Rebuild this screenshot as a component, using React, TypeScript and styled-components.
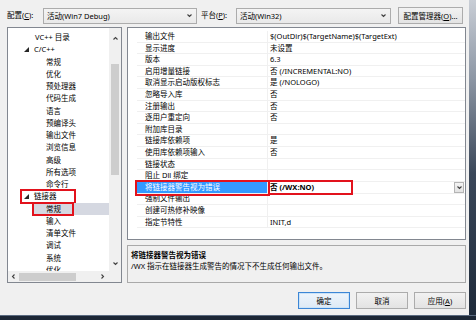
import React from "react";
import styled, { createGlobalStyle, css } from "styled-components";

const GlobalStyle = createGlobalStyle`
  html, body { margin: 0; padding: 0; background: #f0f0f0; }
  body {
    font-family: "Noto Sans", "Noto Sans CJK SC", sans-serif;
    font-size: 7.5px;
    color: #000;
  }
  * { box-sizing: border-box; }
`;

const RED = "#e2121c";

const Screen = styled.div`
  width: 476px;
  height: 320px;
  display: flex;
  flex-direction: column;
  overflow: hidden;
`;

const Main = styled.div`
  display: flex;
  height: 315px;
`;

const Dialog = styled.div`
  width: 469px;
  background: #f0f0f0;
  padding: 7px 0 0 7px;
  display: flex;
  flex-direction: column;
`;

const RightEdge = styled.div`
  width: 7px;
  background: linear-gradient(to bottom, #c9ced6 0%, #8c96a4 25%, #3a4759 55%, #1e2a3a 100%);
`;

const BottomEdge = styled.div`
  height: 5px;
  background: #1c2736;
  border-top: 1px solid #5a6a80;
`;

/* ---------- top bar ---------- */
const TopBar = styled.div`
  display: flex;
  align-items: center;
  height: 17px;
`;

const FieldLabel = styled.span<{ $w: number; $ml?: number }>`
  width: ${(p) => p.$w}px;
  margin-left: ${(p) => p.$ml ?? 0}px;
  line-height: 17px;
  white-space: nowrap;
`;

const Combo = styled.div<{ $w: number }>`
  width: ${(p) => p.$w}px;
  height: 16px;
  border: 1px solid #acacac;
  background: linear-gradient(#f4f4f4, #e9e9e9);
  display: flex;
  align-items: center;
  justify-content: space-between;
  padding: 0 4px 0 3px;
  white-space: nowrap;
`;

const PushButton = styled.div<{ $w: number; $default?: boolean; $ml?: number }>`
  width: ${(p) => p.$w}px;
  height: 17px;
  margin-left: ${(p) => p.$ml ?? 0}px;
  border: 1px solid #acacac;
  background: linear-gradient(#f2f2f2, #e3e3e3);
  display: flex;
  align-items: center;
  justify-content: center;
  white-space: nowrap;
  ${(p) =>
    p.$default &&
    css`
      border-color: #3c86d6;
      box-shadow: inset 0 0 0 1px #cbe3f8;
      background: linear-gradient(#eef5fc, #dde9f5);
    `}
`;

/* ---------- body ---------- */
const Body = styled.div`
  display: flex;
  gap: 5px;
  margin-top: 3px;
  height: 256px;
`;

const Tree = styled.div`
  width: 115px;
  height: 256px;
  border: 1px solid #828790;
  background: #fff;
  display: grid;
  grid-template-columns: 1fr 12px;
  grid-template-rows: 1fr 11px;
  overflow: hidden;
`;

const TreeList = styled.div`
  padding-top: 3px;
  overflow: hidden;
`;

const TreeRow = styled.div<{ $level: number }>`
  height: 12.25px;
  line-height: 12.25px;
  display: flex;
  padding-left: ${(p) => (p.$level === 1 ? 13 : 25)}px;
  white-space: nowrap;
`;

const TreeCell = styled.div<{ $selected?: boolean }>`
  flex: 1;
  display: flex;
  background: ${(p) => (p.$selected ? "#d5d8e1" : "transparent")};
`;

const TreeLabel = styled.span<{ $level: number; $mark?: number }>`
  display: flex;
  align-items: center;
  gap: 5px;
  padding-left: ${(p) => (p.$level === 1 ? 3 : 13)}px;
  ${(p) =>
    p.$mark &&
    css`
      width: ${p.$mark}px;
      outline: 2px solid ${RED};
      outline-offset: -1px;
    `}
`;

const Twisty = styled.svg`
  width: 5px;
  height: 5px;
  flex: none;
`;

const Spacer = styled.span`
  width: 6px;
  flex: none;
`;

const VScroll = styled.div`
  background: #f0f0f0;
  display: flex;
  flex-direction: column;
  align-items: center;
`;

const ScrollArrow = styled.div<{ $h: number; $w?: number }>`
  height: ${(p) => p.$h}px;
  width: ${(p) => p.$w ?? 12}px;
  display: flex;
  align-items: center;
  justify-content: center;
  flex: none;
`;

const VTrack = styled.div`
  flex: 1;
  width: 100%;
  display: flex;
  flex-direction: column;
  align-items: center;
`;

const VThumb = styled.div`
  margin-top: 16px;
  width: 8px;
  height: 111px;
  background: #cdcdcd;
`;

const HScroll = styled.div`
  background: #f0f0f0;
  display: flex;
  align-items: center;
`;

const HTrack = styled.div`
  flex: 1;
  height: 100%;
  display: flex;
  align-items: center;
`;

const HThumb = styled.div`
  width: 57px;
  height: 8px;
  background: #cdcdcd;
`;

const Corner = styled.div`
  background: #f0f0f0;
`;

/* ---------- property grid ---------- */
const RightCol = styled.div`
  width: 339px;
  display: flex;
  flex-direction: column;
  gap: 5px;
`;

const Grid = styled.div`
  height: 213px;
  border: 1px solid #828790;
  background: #fff;
  padding-top: 3px;
  overflow: hidden;
`;

const GridRow = styled.div`
  height: 11.6px;
  display: grid;
  grid-template-columns: 9px 131px 1fr;
  white-space: nowrap;
`;

const Gutter = styled.div``;

const NameCell = styled.div<{ $selected?: boolean }>`
  line-height: 10.6px;
  padding-left: 8px;
  border-bottom: 1px solid #f0f0f0;
  border-right: 1px solid #f0f0f0;
  ${(p) =>
    p.$selected &&
    css`
      background: #3399ff;
      color: #fff;
      outline: 2px solid ${RED};
      outline-offset: 0px;
      position: relative;
      z-index: 1;
    `}
`;

const ValueCell = styled.div<{ $selected?: boolean }>`
  line-height: 10.6px;
  border-bottom: 1px solid #f0f0f0;
  display: flex;
  align-items: stretch;
  ${(p) =>
    p.$selected &&
    css`
      font-weight: bold;
    `}
`;

const ValueText = styled.span<{ $mark?: number }>`
  padding-left: 2px;
  ${(p) =>
    p.$mark &&
    css`
      width: ${p.$mark}px;
      outline: 2px solid ${RED};
      outline-offset: 0px;
    `}
`;

const DropButton = styled.div`
  margin-left: auto;
  margin-right: 1px;
  width: 10px;
  height: 11px;
  border: 1px solid #b4b4b4;
  background: linear-gradient(#f4f4f4, #e2e2e2);
  display: flex;
  align-items: center;
  justify-content: center;
`;

/* ---------- description ---------- */
const Description = styled.div`
  height: 38px;
  border: 1px solid #a9a9a9;
  background: #f0f0f0;
  padding: 4px 3px;
  line-height: 10.5px;
  white-space: nowrap;
`;

const DescTitle = styled.div`
  font-weight: bold;
`;

const DescText = styled.div``;

/* ---------- footer ---------- */
const Footer = styled.div`
  display: flex;
  justify-content: flex-end;
  gap: 6px;
  margin-top: 9px;
  padding-right: 3px;
`;

/* ---------- icons ---------- */
const Chevron = ({ dir, size = 5 }: { dir: "up" | "down" | "left" | "right"; size?: number }) => {
  const pts: Record<string, string> = {
    down: "0.5,1.5 2.5,3.5 4.5,1.5",
    up: "0.5,3.5 2.5,1.5 4.5,3.5",
    left: "3.5,0.5 1.5,2.5 3.5,4.5",
    right: "1.5,0.5 3.5,2.5 1.5,4.5",
  };
  return (
    <svg width={size} height={size} viewBox="0 0 5 5">
      <polyline points={pts[dir]} fill="none" stroke="#404040" strokeWidth="1.1" />
    </svg>
  );
};

type TItem = { label: string; level: number; expanded?: boolean; selected?: boolean; mark?: number };

const treeItems: TItem[] = [
  { label: "VC++ 目录", level: 1 },
  { label: "C/C++", level: 1, expanded: true },
  { label: "常规", level: 2 },
  { label: "优化", level: 2 },
  { label: "预处理器", level: 2 },
  { label: "代码生成", level: 2 },
  { label: "语言", level: 2 },
  { label: "预编译头", level: 2 },
  { label: "输出文件", level: 2 },
  { label: "浏览信息", level: 2 },
  { label: "高级", level: 2 },
  { label: "所有选项", level: 2 },
  { label: "命令行", level: 2 },
  { label: "链接器", level: 1, expanded: true, mark: 54 },
  { label: "常规", level: 2, selected: true, mark: 40 },
  { label: "输入", level: 2 },
  { label: "清单文件", level: 2 },
  { label: "调试", level: 2 },
  { label: "系统", level: 2 },
  { label: "优化", level: 2 },
];

type GItem = { name: string; value: string; selected?: boolean };

const gridItems: GItem[] = [
  { name: "输出文件", value: "$(OutDir)$(TargetName)$(TargetExt)" },
  { name: "显示进度", value: "未设置" },
  { name: "版本", value: "6.3" },
  { name: "启用增量链接", value: "否 (/INCREMENTAL:NO)" },
  { name: "取消显示启动版权标志", value: "是 (/NOLOGO)" },
  { name: "忽略导入库", value: "否" },
  { name: "注册输出", value: "否" },
  { name: "逐用户重定向", value: "否" },
  { name: "附加库目录", value: "" },
  { name: "链接库依赖项", value: "是" },
  { name: "使用库依赖项输入", value: "否" },
  { name: "链接状态", value: "" },
  { name: "阻止 Dll 绑定", value: "" },
  { name: "将链接器警告视为错误", value: "否 (/WX:NO)", selected: true },
  { name: "强制文件输出", value: "" },
  { name: "创建可热修补映像", value: "" },
  { name: "指定节特性", value: "INIT,d" },
];

export default function App() {
  return (
    <>
      <GlobalStyle />
      <Screen>
        <Main>
          <Dialog>
            <TopBar>
              <FieldLabel $w={36}>
                配置(<u>C</u>):
              </FieldLabel>
              <Combo $w={154}>
                <span>活动(Win7 Debug)</span>
                <Chevron dir="down" />
              </Combo>
              <FieldLabel $w={35} $ml={4}>
                平台(<u>P</u>):
              </FieldLabel>
              <Combo $w={155}>
                <span>活动(Win32)</span>
                <Chevron dir="down" />
              </Combo>
              <PushButton $w={65} $ml={7}>
                配置管理器(<u>O</u>)...
              </PushButton>
            </TopBar>

            <Body>
              <Tree>
                <TreeList>
                  {treeItems.map((t, i) => (
                    <TreeRow key={i} $level={t.level}>
                      <TreeCell $selected={t.selected}>
                        <TreeLabel $level={t.level} $mark={t.mark}>
                          {t.level === 1 &&
                            (t.expanded ? (
                              <Twisty viewBox="0 0 5 5">
                                <polygon points="5,0 5,5 0,5" fill="#262626" />
                              </Twisty>
                            ) : (
                              <Spacer />
                            ))}
                          <span>{t.label}</span>
                        </TreeLabel>
                      </TreeCell>
                    </TreeRow>
                  ))}
                </TreeList>
                <VScroll>
                  <ScrollArrow $h={20}>
                    <Chevron dir="up" />
                  </ScrollArrow>
                  <VTrack>
                    <VThumb />
                  </VTrack>
                  <ScrollArrow $h={15}>
                    <Chevron dir="down" />
                  </ScrollArrow>
                </VScroll>
                <HScroll>
                  <ScrollArrow $h={11} $w={11}>
                    <Chevron dir="left" />
                  </ScrollArrow>
                  <HTrack>
                    <HThumb />
                  </HTrack>
                  <ScrollArrow $h={11} $w={14}>
                    <Chevron dir="right" />
                  </ScrollArrow>
                </HScroll>
                <Corner />
              </Tree>

              <RightCol>
                <Grid>
                  {gridItems.map((g, i) => (
                    <GridRow key={i}>
                      <Gutter />
                      <NameCell $selected={g.selected}>{g.name}</NameCell>
                      <ValueCell $selected={g.selected}>
                        <ValueText $mark={g.selected ? 83 : undefined}>{g.value}</ValueText>
                        {g.selected && (
                          <DropButton>
                            <Chevron dir="down" size={5} />
                          </DropButton>
                        )}
                      </ValueCell>
                    </GridRow>
                  ))}
                </Grid>
                <Description>
                  <DescTitle>将链接器警告视为错误</DescTitle>
                  <DescText>/WX 指示在链接器生成警告的情况下不生成任何输出文件。</DescText>
                </Description>
              </RightCol>
            </Body>

            <Footer>
              <PushButton $w={52} $default>
                确定
              </PushButton>
              <PushButton $w={52}>取消</PushButton>
              <PushButton $w={52}>
                应用(<u>A</u>)
              </PushButton>
            </Footer>
          </Dialog>
          <RightEdge />
        </Main>
        <BottomEdge />
      </Screen>
    </>
  );
}
